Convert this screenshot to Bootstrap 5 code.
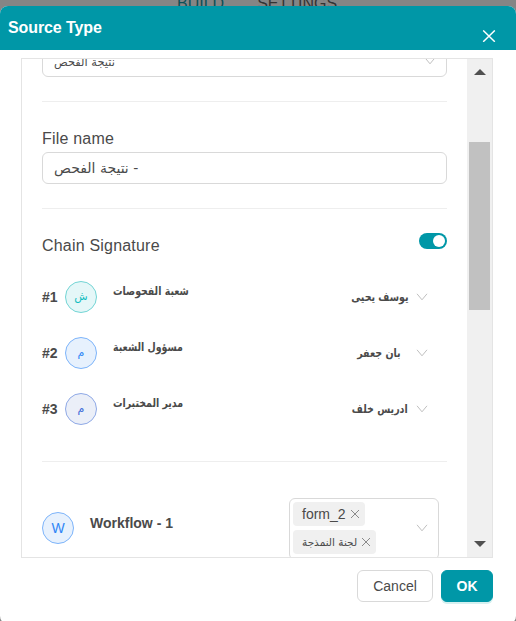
<!DOCTYPE html>
<html lang="en">
<head>
<meta charset="utf-8">
<meta name="viewport" content="width=device-width, initial-scale=1">
<title>Source Type</title>
<link href="https://cdn.jsdelivr.net/npm/bootstrap@5.3.0/dist/css/bootstrap.min.css" rel="stylesheet">
<style>
:root{--teal:#0097a7;--ink:#4a4a4a}
html,body{height:621px;overflow:hidden}
body{background:#858585;font-family:"Liberation Sans","DejaVu Sans",sans-serif;font-size:14px;line-height:20px;color:var(--ink)}
.page-tabs{height:6px;padding-left:177px;gap:33px;font-size:16px;line-height:16px;color:#333}
.page-tabs span{margin-top:-4px}
.page-tabs .current{color:#0b4f57}
.dialog{height:618px;border-radius:8px}
.dialog-head{height:44px;background:var(--teal);border-radius:8px 8px 0 0;padding:0 20px 0 8px}
.dialog-head h1{font-size:16px;line-height:20px;margin-top:12px;letter-spacing:-.1px}
.dialog-head svg{margin-top:24px}
.viewer{width:472px;height:500px;margin:8px 0 0 21px;border:1px solid #e4e4e4}
.content{width:445px;padding:0 20px}
.field{height:32px;border:1px solid #d9d9d9;border-radius:6px;padding:0 10px 0 11px}
.field-select{margin-top:-14px}
.field-select .ar{font-size:11.4px;padding-top:2px}
.field-text{margin-top:3px}
.field-text .ar{font-size:14px;direction:ltr}
.rule{height:1px;background:#eee}
.rule-wide{margin-bottom:36px}
.caption{font-size:16px;line-height:20px;letter-spacing:.2px}
.caption-file{margin-top:27px}
.caption-chain{margin-top:3px}
.ar{font-family:"DejaVu Sans",sans-serif;direction:rtl;white-space:nowrap}
.chain{margin-top:24px;height:36px}
.toggle{width:28px;height:16px;border-radius:8px;background:var(--teal);padding:2px}
.toggle i{width:12px;height:12px;border-radius:50%;background:#fff}
.signer{height:56px}
.num{width:23px}
.face{width:32px;height:32px;border-radius:50%;border:1px solid;flex:none}
.face.ar{font-size:11px}
.face-teal{background:#e5f7f8;border-color:#74d5d5;color:#13bdc0}
.face-blue{background:#e7f1fd;border-color:#7db4fa;color:#2f86f6}
.face-navy{background:#ebeff8;border-color:#8fa9e6;color:#3b6ad8}
.role{margin-left:16px;margin-bottom:12px;font-size:11.5px;transform:scaleX(.82);transform-origin:left}
.person{font-size:11.5px;margin-right:8px;transform:scaleX(.825);transform-origin:right}
.person-short{margin-right:15px}
.signer svg{margin-right:19px}
.step .face{margin-top:14px}
.step b{margin-top:15px}
.picker{width:150px;height:62px;border:1px solid #d9d9d9;border-radius:6px;padding:3px 3px 5px}
.picker>svg{margin-right:7px}
.chip{height:24px;background:#f0f0f0;border-radius:4px;padding:0 5px 0 9px;gap:4px}
.chip .ar{font-size:10.5px}
.track{width:25px;background:#f0f0f0}
.thumb{width:21px;height:168px;margin:67px 0 0 2px;background:#c1c1c1}
.arrow-up{margin-top:10px}
.arrow-down{margin-bottom:10px}
.actions{padding:12px 23px 0 0;gap:8px}
.actions .btn{width:76px;height:32px;font-size:14px;line-height:20px;padding:5px 0;border-radius:6px}
.actions .btn-teal{width:52px}
.btn-plain{color:var(--ink);border-color:#d9d9d9;background:#fff}
.btn-teal,.btn-teal:hover{color:#fff;background:var(--teal);border-color:var(--teal);box-shadow:0 2px 0 #d5f0f0}
</style>
</head>
<body>
<nav class="page-tabs d-flex overflow-hidden"><span class="current">BUILD</span><span>SETTINGS</span></nav>
<div class="dialog bg-white">
  <header class="dialog-head d-flex justify-content-between align-items-start text-white">
    <h1 class="fw-bold mb-0">Source Type</h1>
    <svg width="14" height="12" viewBox="0 0 14 12" fill="none" stroke="#fff" stroke-width="1.4"><path d="M1.2.4l11.6 11.4M12.8.4L1.2 11.8"/></svg>
  </header>
  <main class="viewer d-flex overflow-hidden">
    <div class="content flex-shrink-0">
      <div class="field field-select d-flex align-items-center justify-content-between">
        <span class="ar">نتيجة الفحص</span>
        <svg width="12" height="8" viewBox="0 0 12 8" fill="none" stroke="#bfbfbf"><path d="M1 .8l5 6 5-6"/></svg>
      </div>
      <div class="rule mt-4"></div>
      <div class="caption caption-file">File name</div>
      <div class="field field-text d-flex align-items-center"><span class="ar">نتيجة الفحص -</span></div>
      <div class="rule mt-4"></div>
      <div class="chain d-flex justify-content-between align-items-start">
        <span class="caption caption-chain">Chain Signature</span>
        <span class="toggle d-flex justify-content-end"><i></i></span>
      </div>
      <div class="signer d-flex align-items-center">
        <b class="num">#1</b><span class="face face-teal ar d-flex align-items-center justify-content-center">ش</span>
        <b class="role ar">شعبة الفحوصات</b><b class="person ar ms-auto">يوسف يحيى</b>
        <svg width="12" height="8" viewBox="0 0 12 8" fill="none" stroke="#bfbfbf"><path d="M1 .8l5 6 5-6"/></svg>
      </div>
      <div class="signer d-flex align-items-center">
        <b class="num">#2</b><span class="face face-blue ar d-flex align-items-center justify-content-center">م</span>
        <b class="role ar">مسؤول الشعبة</b><b class="person person-short ar ms-auto">بان جعفر</b>
        <svg width="12" height="8" viewBox="0 0 12 8" fill="none" stroke="#bfbfbf"><path d="M1 .8l5 6 5-6"/></svg>
      </div>
      <div class="signer d-flex align-items-center">
        <b class="num">#3</b><span class="face face-navy ar d-flex align-items-center justify-content-center">م</span>
        <b class="role ar">مدير المختبرات</b><b class="person ar ms-auto">ادريس خلف</b>
        <svg width="12" height="8" viewBox="0 0 12 8" fill="none" stroke="#bfbfbf"><path d="M1 .8l5 6 5-6"/></svg>
      </div>
      <div class="rule rule-wide mt-4"></div>
      <div class="step d-flex align-items-start">
        <span class="face face-blue d-flex align-items-center justify-content-center">W</span>
        <b class="ms-3">Workflow - 1</b>
        <div class="picker d-flex align-items-center justify-content-between ms-auto me-2">
          <div class="d-flex flex-column align-items-start gap-1">
            <span class="chip d-flex align-items-center">form_2 <svg width="10" height="10" viewBox="0 0 10 10" fill="none" stroke="#8a8a8a"><path d="M1 1l8 8M9 1L1 9"/></svg></span>
            <span class="chip d-flex align-items-center"><span class="ar">لجنة النمذجة</span><svg width="10" height="10" viewBox="0 0 10 10" fill="none" stroke="#8a8a8a"><path d="M1 1l8 8M9 1L1 9"/></svg></span>
          </div>
          <svg width="12" height="8" viewBox="0 0 12 8" fill="none" stroke="#bfbfbf"><path d="M1 .8l5 6 5-6"/></svg>
        </div>
      </div>
    </div>
    <div class="track d-flex flex-column flex-shrink-0">
      <svg class="arrow-up mx-auto" width="12" height="6" viewBox="0 0 12 6" fill="#505050"><path d="M6 0l6 6H0z"/></svg>
      <div class="thumb"></div>
      <svg class="arrow-down mx-auto mt-auto" width="12" height="6" viewBox="0 0 12 6" fill="#505050"><path d="M0 0h12L6 6z"/></svg>
    </div>
  </main>
  <footer class="actions d-flex justify-content-end">
    <button type="button" class="btn btn-plain">Cancel</button>
    <button type="button" class="btn btn-teal fw-bold">OK</button>
  </footer>
</div>
<script src="https://cdn.jsdelivr.net/npm/bootstrap@5.3.0/dist/js/bootstrap.bundle.min.js"></script>
</body>
</html>
